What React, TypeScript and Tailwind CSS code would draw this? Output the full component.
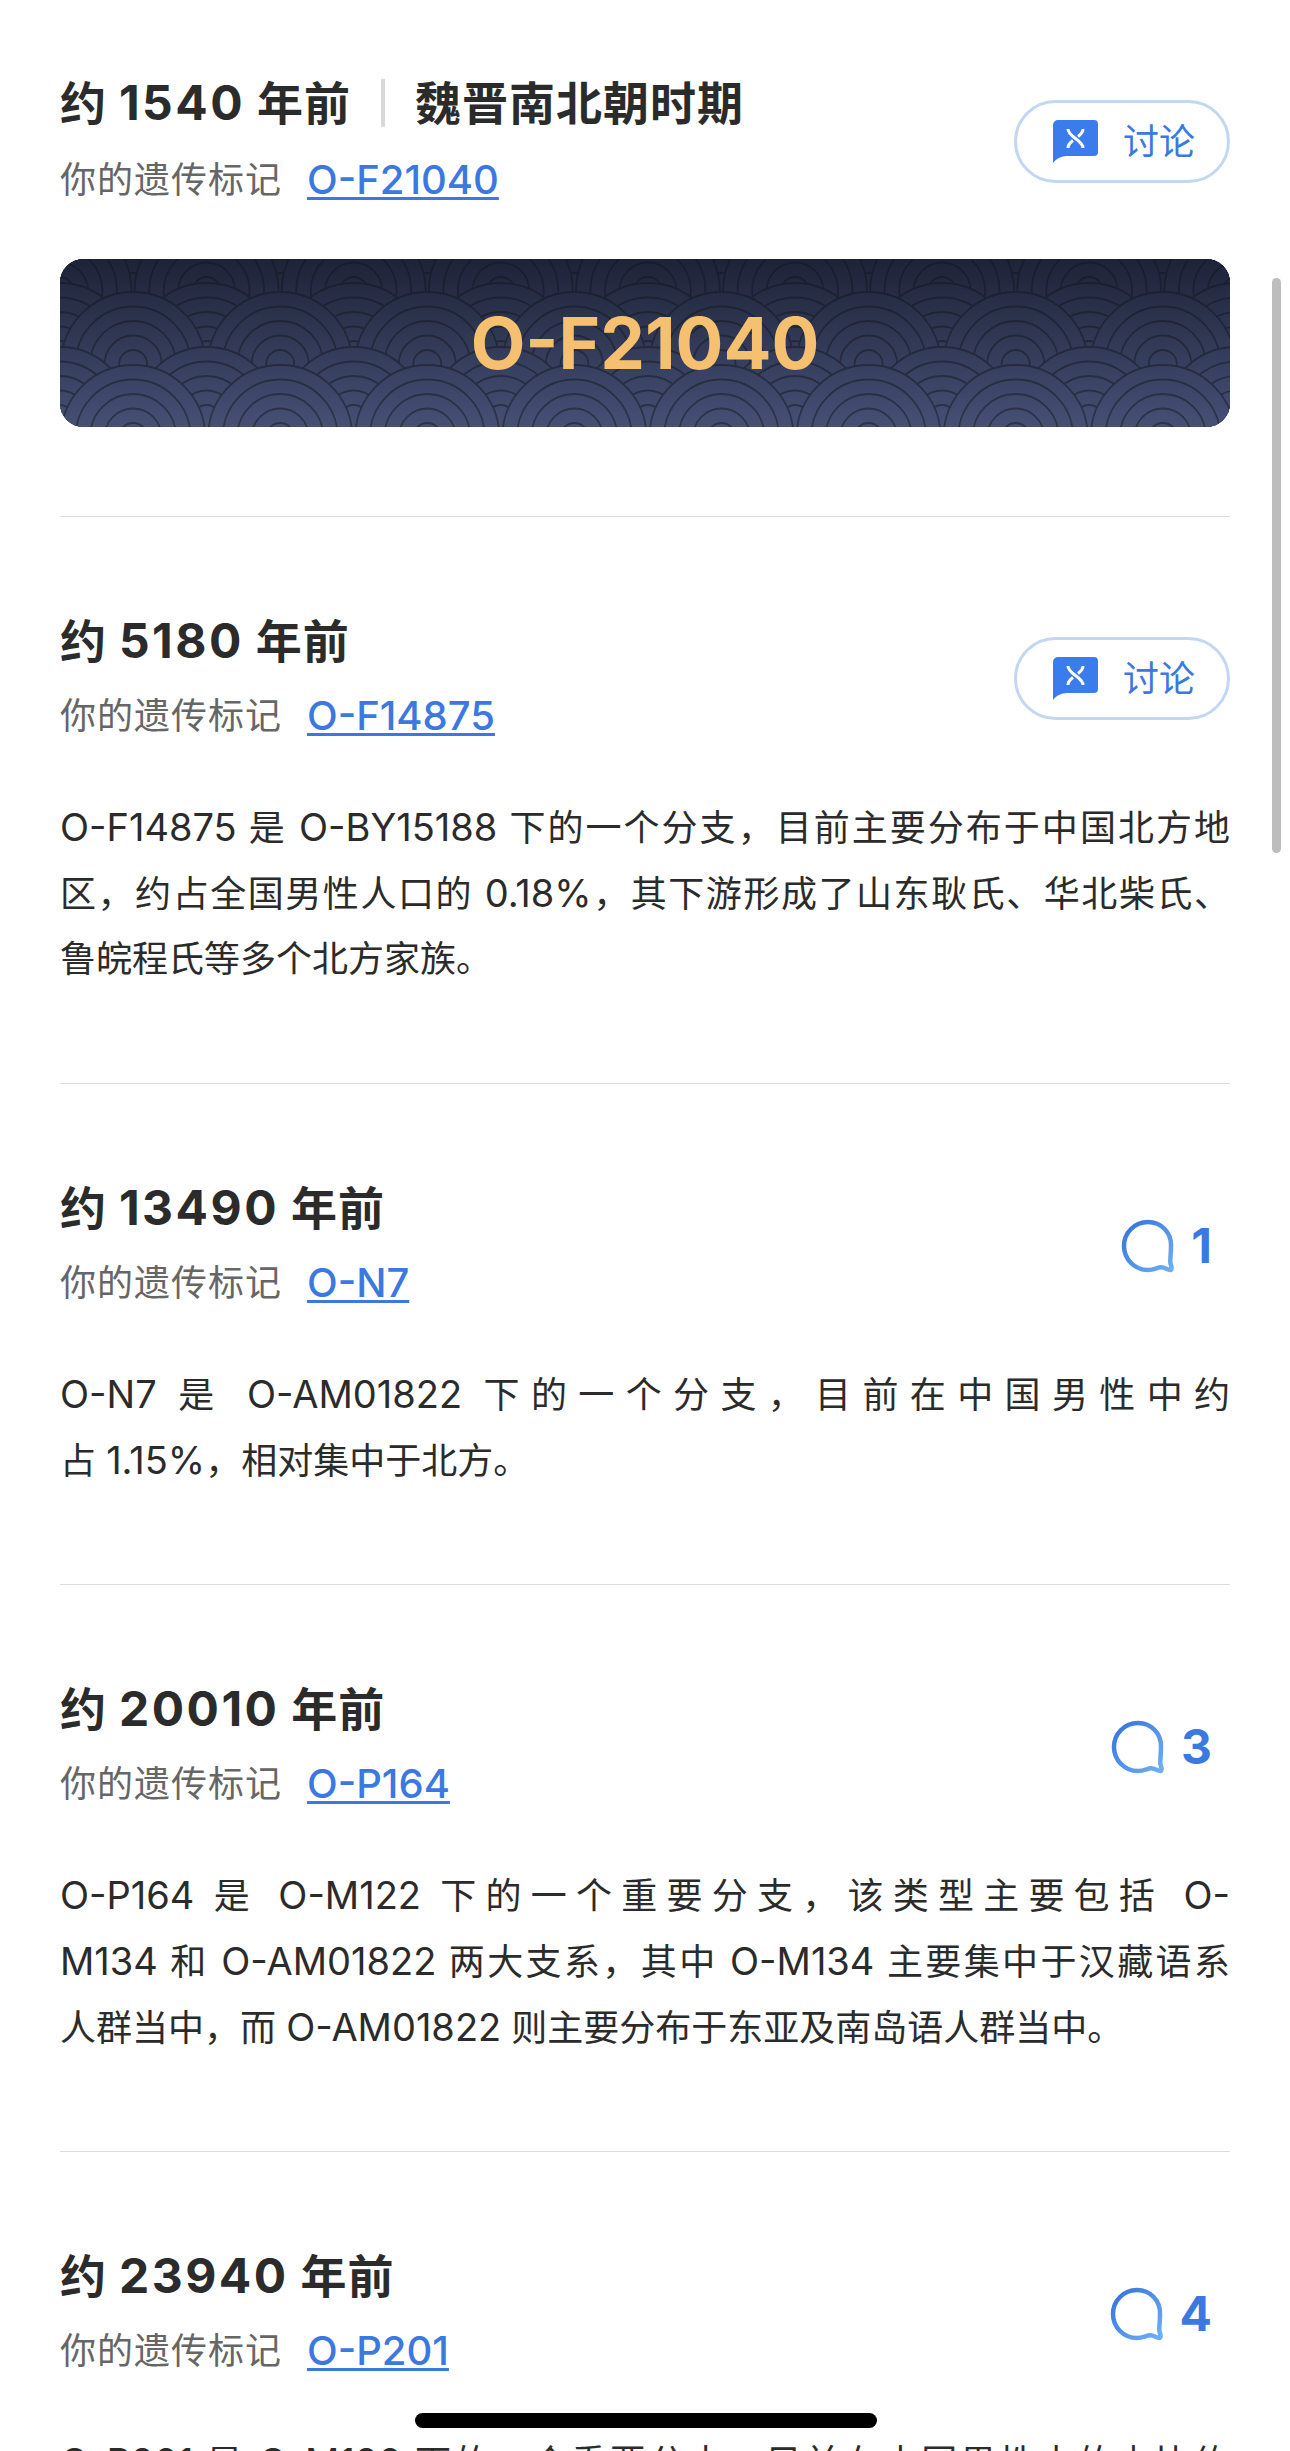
import React from 'react';

const FONT = 'font-["Inter","Noto_Sans_CJK_SC",sans-serif]';

// seigaiha rows, painted top to bottom so lower rows cover upper ones
const ROWS = [
  { top: 215, offset: 0 },
  { top: 219, offset: 73.5 },
  { top: 283, offset: 73.5 },
  { top: 292, offset: 0 },
  { top: 347, offset: 73.5 },
  { top: 365, offset: 0 },
];
const RINGS = [72, 57.5, 43, 28.5, 14];
const CARD_TOP = 259;

function WavePattern() {
  const columns = Array.from({ length: 10 }, (_, i) => 133 - 60 - 147 + i * 147.1);
  return (
    <svg className="absolute inset-0 h-full w-full" viewBox="0 0 1170 168" preserveAspectRatio="none">
      <defs>
        <linearGradient id="cardBg" gradientUnits="userSpaceOnUse" x1="0" y1="0" x2="0" y2="168">
          <stop offset="0" stopColor="#1d2337" />
          <stop offset="1" stopColor="#465076" />
        </linearGradient>
        <linearGradient id="cardLine" gradientUnits="userSpaceOnUse" x1="0" y1="0" x2="0" y2="168">
          <stop offset="0" stopColor="#171b2c" />
          <stop offset="1" stopColor="#2e344a" />
        </linearGradient>
      </defs>
      <rect width="1170" height="168" fill="url(#cardBg)" />
      {ROWS.map((row) =>
        columns.map((cx) => {
          const x = cx + row.offset;
          const cy = row.top - CARD_TOP + 72;
          return (
            <g key={`${row.top}-${x}`} fill="url(#cardBg)" stroke="url(#cardLine)" strokeWidth="1.8">
              {RINGS.map((r) => (
                <circle key={r} cx={x} cy={cy} r={r} />
              ))}
            </g>
          );
        }),
      )}
    </svg>
  );
}

function DiscussIcon() {
  return (
    <svg width="45" height="43" viewBox="0 0 45 43">
      <path d="M5 0H41a4 4 0 0 1 4 4V32a4 4 0 0 1-4 4H14C8 36 3 39 0 43V5a5 5 0 0 1 5-5z" fill="#3b7cec" />
      <path
        d="M15 9C15 17 30 20 30 28M30 9C30 13 27 15 25 16.500M20 20.500C18 22 15 24 15 28"
        fill="none"
        stroke="#fff"
        strokeWidth="3"
      />
    </svg>
  );
}

function DiscussButton() {
  return (
    <div className="mt-[5px] flex h-[83px] w-[216px] items-center rounded-full border-[3px] border-[#c3d7f3] pl-[36px]">
      <DiscussIcon />
      <span className="ml-[25px] text-[36px] leading-none text-[#3b78e0]">讨论</span>
    </div>
  );
}

function CommentCount({ count }: { count: number }) {
  return (
    <div className="mt-[5px] flex items-center gap-[16px] pr-[18px]">
      <svg width="54" height="54" viewBox="0 0 54 54">
        <defs>
          <linearGradient id="bubble" x1="0" y1="0" x2="1" y2="1">
            <stop offset="0" stopColor="#3672dc" />
            <stop offset="1" stopColor="#6cb0f2" />
          </linearGradient>
        </defs>
        <path
          d="M27 3C13.7 3 3 13.7 3 27s10.7 24 24 24c6 0 9.500-2.600 13-2.800 3.500-.2 6.500 2.800 9 2.800 2.500 0 1.500-3.500.5-6.500-.8-2.800.5-7 .5-17.500C50.500 13.700 40.300 3 27 3z"
          fill="none"
          stroke="url(#bubble)"
          strokeWidth="4.5"
          strokeLinejoin="round"
        />
      </svg>
      <span className="text-[48px] leading-none font-bold text-[#3b78e0]">{count}</span>
    </div>
  );
}

interface Entry {
  age: string;
  marker: string;
  comments: number | null;
  lines: string[];
  cutOff?: boolean;
}

const ENTRIES: Entry[] = [
  {
    age: '5180',
    marker: 'O-F14875',
    comments: null,
    lines: [
      'O-F14875 是 O-BY15188 下的一个分支，目前主要分布于中国北方地',
      '区，约占全国男性人口的 0.18%，其下游形成了山东耿氏、华北柴氏、',
      '鲁皖程氏等多个北方家族。',
    ],
  },
  {
    age: '13490',
    marker: 'O-N7',
    comments: 1,
    lines: ['O-N7 是 O-AM01822 下的一个分支，目前在中国男性中约', '占 1.15%，相对集中于北方。'],
  },
  {
    age: '20010',
    marker: 'O-P164',
    comments: 3,
    lines: [
      'O-P164 是 O-M122 下的一个重要分支，该类型主要包括 O-',
      'M134 和 O-AM01822 两大支系，其中 O-M134 主要集中于汉藏语系',
      '人群当中，而 O-AM01822 则主要分布于东亚及南岛语人群当中。',
    ],
  },
  {
    age: '23940',
    marker: 'O-P201',
    comments: 4,
    lines: ['O-P201 是 O-M120 下的一个重要分支，目前在中国男性中的占比约'],
    cutOff: true,
  },
];

// latin runs sit a little larger than the CJK around them
function MixedText({ text }: { text: string }) {
  const parts = text.split(/([A-Za-z0-9.%-]+)/);
  return (
    <>
      {parts.map((part, i) =>
        i % 2 === 1 ? (
          <span key={i} className="text-[38px]">
            {part}
          </span>
        ) : (
          part
        ),
      )}
    </>
  );
}

function AgeText({ years }: { years: string }) {
  return (
    <span>
      约 <span className="text-[48px] tracking-[2.5px]">{years}</span> 年前
    </span>
  );
}

function MarkerLine({ marker, gap }: { marker: string; gap: string }) {
  return (
    <div className={`flex h-[50px] items-center text-[36px] leading-[50px] tracking-[1px] text-[#666666] ${gap}`}>
      <span>你的遗传标记</span>
      <span className="ml-[25px] text-[40px] font-medium tracking-normal text-[#3b78e0] underline decoration-[3px] underline-offset-[3px]">
        {marker}
      </span>
    </div>
  );
}

function EntrySection({ entry, last }: { entry: Entry; last: boolean }) {
  return (
    <section className={`pt-[94px] pb-[91px] ${last ? '' : 'border-b border-[#dcdcdc]'}`}>
      <div className="flex items-center justify-between">
        <div>
          <h2 className="h-[60px] text-[46px] leading-[60px] font-bold tracking-[1px] text-[#2b2b2b]">
            <AgeText years={entry.age} />
          </h2>
          <MarkerLine marker={entry.marker} gap="mt-[20px]" />
        </div>
        {entry.comments === null ? <DiscussButton /> : <CommentCount count={entry.comments} />}
      </div>
      <div className="mt-[53px] text-[36px] leading-[66px] text-[#2b2b2b]">
        {entry.lines.map((line, i) => (
          <p
            key={line}
            className={
              entry.cutOff || i < entry.lines.length - 1
                ? 'h-[66px] text-justify [text-align-last:justify]'
                : 'h-[66px]'
            }
          >
            <MixedText text={line} />
          </p>
        ))}
      </div>
    </section>
  );
}

export default function App() {
  return (
    <div lang="zh-CN" className={`relative h-[2451px] w-[1290px] overflow-hidden bg-white ${FONT}`}>
      <main className="px-[60px]">
        <section className="border-b border-[#dcdcdc] pt-[73px] pb-[89px]">
          <div className="flex items-center justify-between">
            <div>
              <h1 className="flex h-[60px] items-center text-[46px] leading-[60px] font-bold tracking-[1px] text-[#2b2b2b]">
                <AgeText years="1540" />
                <span className="mx-[30px] h-[48px] w-[4px] bg-[#d9d9d9]" />
                <span>魏晋南北朝时期</span>
              </h1>
              <MarkerLine marker="O-F21040" gap="mt-[22px]" />
            </div>
            <DiscussButton />
          </div>
          <div className="relative mt-[54px] flex h-[168px] items-center justify-center overflow-hidden rounded-[24px]">
            <WavePattern />
            <span className="relative text-[71px] leading-none font-bold text-[#f5c06f]">O-F21040</span>
          </div>
        </section>
        {ENTRIES.map((entry, i) => (
          <EntrySection key={entry.marker} entry={entry} last={i === ENTRIES.length - 1} />
        ))}
      </main>
      <div className="absolute top-[278px] left-[1272px] h-[575px] w-[9px] rounded-full bg-[#bdbdbd]" />
      <div className="absolute top-[2413px] left-[415px] h-[15px] w-[462px] rounded-full bg-black" />
    </div>
  );
}
